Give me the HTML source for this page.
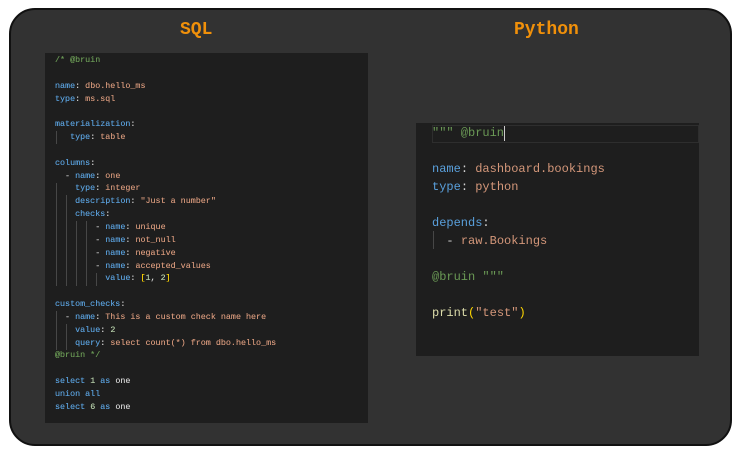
<!DOCTYPE html>
<html><head><style>
body{margin:0;background:#fff;width:741px;height:453px;overflow:hidden;position:relative;font-family:"Liberation Mono",monospace}
.frame{position:absolute;left:9px;top:8px;width:719px;height:434px;background:#323232;border:2px solid #111;border-radius:26px}
.t{position:absolute;color:#f0900a;font-size:18px;font-weight:bold;top:20px}
.p{position:absolute;background:#1e1e1e}
pre{margin:0;font-family:"Liberation Mono",monospace;color:#d4d4d4}
.k{color:#5aa0dc}.s{color:#d4977a}.c{color:#6a9955}.n{color:#b5cea8}.y{color:#ffd700}.f{color:#dcdcaa}
.sql{font-size:8.4px;line-height:12.85px;position:absolute;left:10px;top:1px;text-shadow:0 0 0.3px currentColor}
.py{font-size:12px;line-height:18px;position:absolute;left:16px;top:1px}
.g{position:absolute;width:1px;background:#474747}
</style></head><body>
<div class="frame"></div>
<div class="t" style="left:180px">SQL</div>
<div class="t" style="left:514px">Python</div>
<div class="p" style="left:45px;top:53px;width:323px;height:370px">
<div class="g" style="left:11px;top:78px;height:13px"></div>
<div class="g" style="left:11px;top:130px;height:103px"></div>
<div class="g" style="left:21px;top:142px;height:91px"></div>
<div class="g" style="left:31px;top:168px;height:65px"></div>
<div class="g" style="left:41px;top:168px;height:65px"></div>
<div class="g" style="left:51px;top:220px;height:13px"></div>
<div class="g" style="left:11px;top:258px;height:39px"></div>
<div class="g" style="left:21px;top:271px;height:26px"></div>
<pre class="sql"><span class="c">/* @bruin</span>

<span class="k">name</span>: <span class="s">dbo.hello_ms</span>
<span class="k">type</span>: <span class="s">ms.sql</span>

<span class="k">materialization</span>:
   <span class="k">type</span>: <span class="s">table</span>

<span class="k">columns</span>:
  - <span class="k">name</span>: <span class="s">one</span>
    <span class="k">type</span>: <span class="s">integer</span>
    <span class="k">description</span>: <span class="s">"Just a number"</span>
    <span class="k">checks</span>:
        - <span class="k">name</span>: <span class="s">unique</span>
        - <span class="k">name</span>: <span class="s">not_null</span>
        - <span class="k">name</span>: <span class="s">negative</span>
        - <span class="k">name</span>: <span class="s">accepted_values</span>
          <span class="k">value</span>: <span class="y">[</span><span class="n">1</span>, <span class="n">2</span><span class="y">]</span>

<span class="k">custom_checks</span>:
  - <span class="k">name</span>: <span class="s">This is a custom check name here</span>
    <span class="k">value</span>: <span class="n">2</span>
    <span class="k">query</span>: <span class="s">select count(*) from dbo.hello_ms</span>
<span class="c">@bruin */</span>

<span class="k">select</span> <span class="n">1</span> <span class="k">as</span> one
<span class="k">union all</span>
<span class="k">select</span> <span class="n">6</span> <span class="k">as</span> one</pre>
</div>
<div class="p" style="left:416px;top:123px;width:283px;height:233px">
<div style="position:absolute;left:16px;top:2px;width:267px;height:18px;border:1px solid #2e2e2e;box-sizing:border-box"></div>
<div style="position:absolute;left:88px;top:3px;width:1px;height:15px;background:#ccc"></div>
<div class="g" style="left:17px;top:108px;height:18px"></div>
<pre class="py"><span class="c">""" @bruin</span>

<span class="k">name</span>: <span class="s">dashboard.bookings</span>
<span class="k">type</span>: <span class="s">python</span>

<span class="k">depends</span>:
  - <span class="s">raw.Bookings</span>

<span class="c">@bruin """</span>

<span class="f">print</span><span class="y">(</span><span class="s">"test"</span><span class="y">)</span></pre>
</div>
</body></html>
